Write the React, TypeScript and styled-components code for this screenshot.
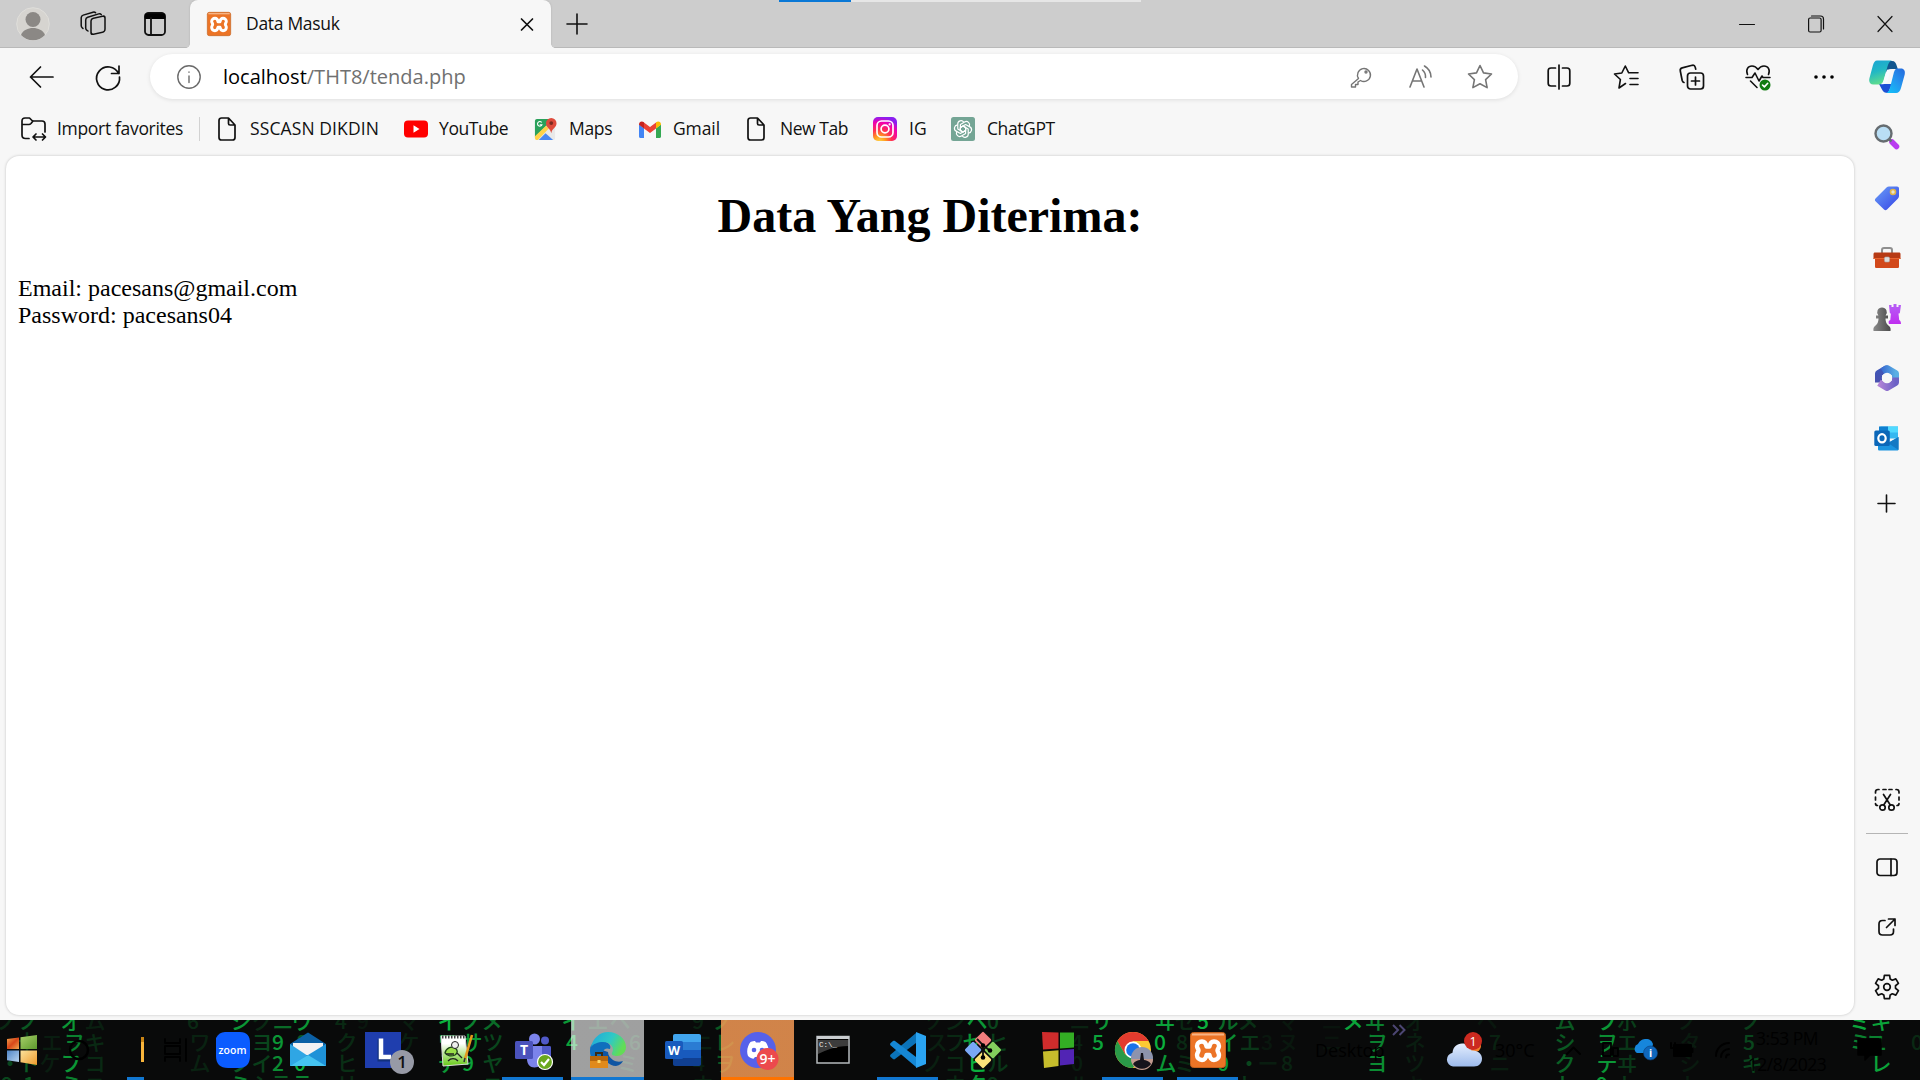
import React from "react";
import styled, { createGlobalStyle } from "styled-components";

const Global = createGlobalStyle`
  html, body { margin: 0; padding: 0; }
  body { width: 1920px; height: 1080px; overflow: hidden; background: #f7f7f7; }
  * { box-sizing: border-box; }
  svg { display: block; flex: none; overflow: visible; }
`;

const ui = `"Open Sans", "Noto Sans", sans-serif`;

const Screen = styled.div`
  width: 1920px;
  height: 1080px;
  display: flex;
  flex-direction: column;
  background: #f7f7f7;
  font-family: ${ui};
  color: #111;
`;

const TitleBar = styled.header`
  height: 48px;
  flex: none;
  display: flex;
  background: #cdcdcd;
  box-shadow: inset 0 -1px 0 #b9b9b9;
  position: relative;
`;

const LoadStrip = styled.div`
  position: absolute;
  left: 779px;
  top: 0;
  width: 362px;
  height: 2px;
  background: linear-gradient(90deg, #0a78d6 72px, #e6e6e6 72px);
`;

const Cell = styled.div<{ $w: number; $h?: number }>`
  width: ${(p) => p.$w}px;
  height: ${(p) => (p.$h ? p.$h + "px" : "auto")};
  flex: none;
  display: flex;
  align-items: center;
  justify-content: center;
`;

const Spacer = styled.div`
  flex: 1;
`;

const Tab = styled.div`
  width: 361px;
  height: 48px;
  background: #f7f7f7;
  border-radius: 8px 8px 0 0;
  display: flex;
  align-items: center;
  padding: 0 15px 0 17px;
  position: relative;
  box-shadow: 0 0 2px #aaa;
  clip-path: inset(0 -4px 0 -4px);
  &::before, &::after {
    content: "";
    position: absolute;
    bottom: 0;
    width: 4px;
    height: 4px;
  }
  &::before { left: -4px; background: radial-gradient(circle at 0 0, transparent 3.5px, #f7f7f7 4px); }
  &::after { right: -4px; background: radial-gradient(circle at 100% 0, transparent 3.5px, #f7f7f7 4px); }
`;

const Label = styled.span<{ $w: number; $ls?: number; $gap?: number }>`
  width: ${(p) => p.$w}px;
  flex: none;
  font-size: 17.5px;
  letter-spacing: ${(p) => p.$ls ?? 0}px;
  margin-left: ${(p) => p.$gap ?? 0}px;
  line-height: 26px;
  padding-bottom: 2px;
  white-space: nowrap;
`;

const Main = styled.div`
  height: 972px;
  flex: none;
  display: flex;
`;

const Left = styled.div`
  width: 1854px;
  display: flex;
  flex-direction: column;
  padding: 0 0 5px 0;
`;

const Toolbar = styled.div`
  height: 57px;
  flex: none;
  display: flex;
  align-items: center;
`;

const Address = styled.div`
  width: 1368px;
  height: 45px;
  flex: none;
  margin: 0 8px 0 16px;
  border-radius: 23px;
  background: #fff;
  box-shadow: 0 1px 4px rgba(0, 0, 0, 0.1);
  display: flex;
  align-items: center;
  padding: 0 9px 0 27px;
`;

const Url = styled.div`
  flex: 1;
  margin-left: 22px;
  font-size: 20px;
  letter-spacing: 0;
  line-height: 30px;
  color: #707070;
  b { font-weight: 400; color: #000; }
`;

const Bookmarks = styled.nav`
  height: 50px;
  flex: none;
  display: flex;
  align-items: center;
  padding: 0 0 2px 21px;
`;

const Divider = styled.div`
  width: 1px;
  height: 24px;
  background: #d2d2d2;
  margin: 0 18px 0 16px;
`;

const Bookmark = styled.div<{ $after: number }>`
  display: flex;
  align-items: center;
  margin-right: ${(p) => p.$after}px;
`;

const Page = styled.main`
  flex: 1;
  margin: 1px 0 0 6px;
  background: #fff;
  border-radius: 13px;
  box-shadow: 0 0 3px rgba(0, 0, 0, 0.22);
  padding: 32px 12px;
  font-family: "Liberation Serif", "Times New Roman", serif;
  font-size: 24px;
  line-height: 27px;
  color: #000;
`;

const Heading = styled.h1`
  margin: 0 0 32px;
  font-size: 48px;
  line-height: 55px;
  text-align: center;
`;

const Sidebar = styled.aside`
  width: 66px;
  display: flex;
  flex-direction: column;
  padding: 0 1px 3px 0;
`;

const SideRule = styled.div`
  width: 42px;
  height: 1px;
  margin: 4px 12px 3px;
  background: #b5b5b5;
`;

const Taskbar = styled.footer`
  height: 60px;
  flex: none;
  position: relative;
  background: #090a0a;
  overflow: hidden;
`;

const Wallpaper = styled.svg`
  position: absolute;
  left: 0;
  top: 0;
  font-family: "Noto Sans CJK JP", sans-serif;
  font-size: 21px;
  font-weight: 500;
`;

const TaskRow = styled.div`
  position: relative;
  height: 60px;
  display: flex;
  align-items: stretch;
`;

const Task = styled.div<{ $w?: number; $bg?: string; $line?: string; $lineW?: number }>`
  width: ${(p) => p.$w ?? 75}px;
  flex: none;
  display: flex;
  align-items: center;
  justify-content: center;
  background: linear-gradient(${(p) => p.$line ?? "transparent"}, ${(p) => p.$line ?? "transparent"}) center bottom /
      ${(p) => p.$lineW ?? 61}px 3px no-repeat,
    linear-gradient(${(p) => p.$bg ?? "transparent"}, ${(p) => p.$bg ?? "transparent"}) center / 73px 100% no-repeat;
`;

const Tray = styled.div<{ $w: number; $pl?: number }>`
  width: ${(p) => p.$w}px;
  flex: none;
  display: flex;
  align-items: center;
  padding-left: ${(p) => p.$pl ?? 0}px;
  color: #000;
  font-size: 18px;
  white-space: nowrap;
`;

const Overflow = styled(Tray)`
  align-items: flex-start;
  padding-top: 4px;
`;

const Clock = styled.div`
  width: 104px;
  display: flex;
  flex-direction: column;
  align-items: center;
  padding: 5px 0 0 0;
  line-height: 26px;
  font-size: 17.5px;
  letter-spacing: -0.5px;
  color: #000;
`;

type SvgProps = { w: number; h?: number; stroke?: string; sw?: number; children: React.ReactNode };
const Line = ({ w, h = w, stroke = "#111", sw = 1.6, children }: SvgProps) => (
  <svg width={w} height={h} viewBox={`0 0 ${w} ${h}`} fill="none" stroke={stroke} strokeWidth={sw} strokeLinecap="round" strokeLinejoin="round">
    {children}
  </svg>
);

const Avatar = () => (
  <svg width="34" height="34" viewBox="0 0 34 34">
    <circle cx="17" cy="17" r="16.3" fill="#d6d4d0" stroke="#e0dfdb" />
    <circle cx="17" cy="12.5" r="7.5" fill="#8b8885" />
    <path d="M5 28c2-5 7-7 12-7s10 2 12 7a16.300 16.300 0 0 1-24 0z" fill="#8b8885" />
  </svg>
);

const Workspaces = () => (
  <Line w={26} sw={1.5}>
    <rect x="11" y="7" width="14" height="16" rx="2.5" transform="matrix(1 -.22 0 1 0 3.2)" />
    <path d="M8 20l-1-.7c-1-.6-1.300-1.200-1.300-2.400V9c0-1.500.7-2.400 2-2.800l11-3.300c1-.3 2-.1 2.600.7" />
    <path d="M3 17.500l-.8-.8C1.400 16 1.200 15.400 1.200 14.500V6.800c0-1.500.7-2.300 2-2.700L13 1.200c1-.3 2-.1 2.600.6" />
  </Line>
);

const TabActions = () => (
  <Line w={22} h={24} sw={1.8}>
    <rect x="1" y="1" width="20" height="22" rx="3.5" />
    <path d="M1.500 2.500h19v3.500h-19z" fill="#000" stroke="#000" />
    <path d="M7 6v17" />
  </Line>
);

const Xampp = ({ size }: { size: number }) => (
  <svg width={size} height={size} viewBox="0 0 36 36">
    <rect x=".5" y=".5" width="35" height="35" rx="3" fill="#ec7426" stroke="#c4601d" />
    <path d="M2 2.500h32" stroke="#f7b384" strokeWidth="2" />
    <path
      d="M18 14.500h-1.500c-.5-3-2-5-4.500-5-3 0-5 2-5 4.500 0 2 1.500 3 1.500 4.500S7 21 7 23c0 2.800 2 5 5 5 2.500 0 4-2 4.500-5h3c.5 3 2 5 4.500 5 3 0 5-2.200 5-5 0-2-1.500-3-1.500-4.500S29 16 29 14c0-2.500-2-4.500-5-4.500-2.500 0-4 2-4.500 5z"
      fill="#ec7426" stroke="#fff" strokeWidth="4.4" strokeLinejoin="round"
    />
  </svg>
);

const Star = ({ color = "#111", list = false }: { color?: string; list?: boolean }) => (
  <Line w={26} stroke={color} sw={1.6}>
    {list ? (
      <path d="M12.500 19.500l-6.500 4.500 1.400-8.500L1.500 10l7.300-1L12.300 2l3.400 6.800H25M17 14.500h8M17 20.500h8" />
    ) : (
      <path d="M13 1.500l3.500 7.400 8 1.100-5.900 5.600 1.500 8L13 19.700l-7.100 3.900 1.500-8L1.500 10l8-1.100z" />
    )}
  </Line>
);

const DocIcon = () => (
  <Line w={18} h={24} sw={1.7}>
    <path d="M10.500 1H3.500C2 1 1 2 1 3.500v17C1 22 2 23 3.500 23h11c1.500 0 2.500-1 2.500-2.500V8zM10.500 1v5.500c0 1 .5 1.500 1.500 1.500h5" />
  </Line>
);

const Copilot = () => (
  <svg width="36" height="33" viewBox="0 0 36 33">
    <defs>
      <linearGradient id="cpA" x1="0" y1="0" x2=".3" y2="1"><stop stopColor="#1aa3d4" /><stop offset=".5" stopColor="#22b8c4" /><stop offset="1" stopColor="#5fdc8e" /></linearGradient>
      <linearGradient id="cpB" x1="1" y1="0" x2=".2" y2="1"><stop stopColor="#2468dc" /><stop offset=".55" stopColor="#2496ef" /><stop offset="1" stopColor="#14bdf8" /></linearGradient>
    </defs>
    <path d="M17 1h6c3 0 4 2 4.800 5l1 3h-6c-3 0-5 2-6 5z" fill="#10568f" />
    <path d="M10 24l3 5.500c1 2.500 3 3.500 6 3.500l4-9z" fill="#1d50d5" />
    <path d="M8 .5h15c-2.500.5-3.500 2.500-4.500 6l-4 14c-1 3-2.500 4-5 4H4C1 24.500-.5 21.500.5 18L4 5C5 2 6 .5 8 .500z" fill="url(#cpA)" />
    <path d="M28.500 8.500H32c3 0 4.500 2.500 3.700 6L32 28c-1 3.500-2.500 5-5 5H17.500c2-1 3-3 3.700-6l3.300-13c1-4 2-5.500 4-5.500z" fill="url(#cpB)" />
    <path d="M18.500 9.500h3.800c-1 1-1.500 2.300-2 4.500l-1.500 6c-.8 3-2.300 4.200-5.300 4.200h-2c2-.5 2.800-2 3.500-4.700l2-7c.3-1.300.8-2.300 1.500-3z" fill="#f7fbff" />
  </svg>
);

const SearchPic = () => (
  <svg width="26" height="26" viewBox="0 0 26 26">
    <path d="M18 18l4.500 4.500" stroke="#b93cf0" strokeWidth="5.5" strokeLinecap="round" />
    <path d="M14.500 14.500l3 3" stroke="#66707a" strokeWidth="2.5" />
    <circle cx="9.500" cy="9.500" r="8" fill="#b9def5" stroke="#666c70" strokeWidth="2.4" />
  </svg>
);

const TagPic = () => (
  <svg width="26" height="26" viewBox="0 0 26 26">
    <defs><linearGradient id="tg" x2="1" y2="1"><stop stopColor="#6ba0f8" /><stop offset="1" stopColor="#3442e5" /></linearGradient></defs>
    <path d="M15 1.500h8c1.200 0 2 .8 2 2V11c0 1-.3 1.700-1 2.400L13 24.500c-1 1-2 1-3 0l-8.500-8.300c-.8-.8-.8-2 0-2.800L12.500 2.500c.7-.7 1.500-1 2.500-1z" fill="url(#tg)" />
    <circle cx="19" cy="7" r="2.500" fill="#e9e4cc" stroke="#e3b548" strokeWidth="1.6" />
  </svg>
);

const ToolboxPic = () => (
  <svg width="28" height="22" viewBox="0 0 28 22">
    <path d="M9 6V3c0-1.300.8-2 2-2h6c1.200 0 2 .7 2 2v3" fill="none" stroke="#8f8f8f" strokeWidth="2" />
    <path d="M2 11h24v8.500c0 1-.6 1.500-1.500 1.500h-21C2.600 21 2 20.500 2 19.500z" fill="#d2491b" />
    <path d="M2 5.500h24c1 0 1.500.7 1.500 1.600V12H.5V7.100C.5 6.200 1 5.500 2 5.500z" fill="#b73a14" />
    <path d="M.5 11.500h27" stroke="#e9642f" />
    <rect x="11.500" y="10" width="5" height="5" rx="1.2" fill="#ddd" stroke="#aaa" strokeWidth=".6" />
  </svg>
);

const ChessPic = () => (
  <svg width="28" height="28" viewBox="0 0 28 28">
    <defs>
      <linearGradient id="pw" x2="1"><stop stopColor="#8b8b8b" /><stop offset="1" stopColor="#4a4a4a" /></linearGradient>
      <linearGradient id="rk" x2="0" y2="1"><stop stopColor="#b560f5" /><stop offset="1" stopColor="#c02ef0" /></linearGradient>
    </defs>
    <path d="M16 1h2.500v2h2V0h3v3h2V1H28l-1 7c0 1-.5 1.500-1.500 1.500l.7 6.500c1 .5 1.800 1.500 1.800 4H16c-.8-3 0-3.500 1.300-4l.6-6.500c-.8 0-1.100-.5-1.200-1.500z" fill="url(#rk)" />
    <path d="M9 3.500a4.800 4.800 0 0 1 3.600 8H15v3h-2.500c.2 4 1 5.500 3.500 7.500 1 .8 2 2 1.500 5H.5c-.5-3 .5-4.200 1.500-5 2.500-2 3.300-3.500 3.500-7.500H3v-3h2.400A4.800 4.800 0 0 1 9 3.500z" fill="url(#pw)" />
  </svg>
);

const M365Pic = () => (
  <svg width="26" height="28" viewBox="0 0 26 28">
    <defs>
      <linearGradient id="ma" x2="1"><stop stopColor="#3a6fd2" /><stop offset="1" stopColor="#5aaee4" /></linearGradient>
      <linearGradient id="mb" x2="0" y2="1"><stop stopColor="#3e56b8" /><stop offset="1" stopColor="#4a50ae" /></linearGradient>
      <linearGradient id="mc" x2="1"><stop stopColor="#b383d6" /><stop offset="1" stopColor="#6d62c6" /></linearGradient>
    </defs>
    <g fill="none" strokeWidth="7" strokeLinejoin="round">
      <path d="M4.500 18.500V9.500L13 4.600" stroke="url(#mb)" />
      <path d="M21.500 10v8.500L13 23.400 5 18.800" stroke="url(#mc)" />
      <path d="M8.500 7.200L13 4.600l8.500 4.900v4" stroke="url(#ma)" />
    </g>
    <circle cx="13" cy="14" r="5.2" fill="#f7f7f7" />
  </svg>
);

const OutlookPic = () => (
  <svg width="25" height="25" viewBox="0 0 25 25">
    <path d="M7 .5h17v12H5V2.500C5 1.300 5.800.5 7 .500z" fill="#35b8f1" />
    <path d="M14 .5h10v6H14z" fill="#50d9ff" /><path d="M5 .5h9v7H5z" fill="#0f7fd0" />
    <path d="M4 11l10 6 10.500-6v12c0 1-.5 1.500-1.500 1.500H5.500c-1 0-1.500-.5-1.500-1.500z" fill="#1b94e0" />
    <path d="M24.500 11v13L14 17z" fill="#1479c4" />
    <rect x=".3" y="4.500" width="15.500" height="15.500" rx="1.5" fill="#0b67b8" />
    <ellipse cx="8" cy="12.300" rx="3.700" ry="4.100" fill="none" stroke="#fff" strokeWidth="2.2" />
  </svg>
);

const Plus = ({ s = 20, sw = 1.6 }: { s?: number; sw?: number }) => (
  <Line w={s} sw={sw}><path d={`M${s / 2} 1v${s - 2}M1 ${s / 2}h${s - 2}`} /></Line>
);

const gearPath = () => {
  const pts: string[] = [];
  for (let i = 0; i < 6; i++) {
    const a = (i * Math.PI) / 3 - Math.PI / 2;
    [[-0.38, 8.6], [-0.22, 12], [0.22, 12], [0.38, 8.6]].forEach(([d, r]) =>
      pts.push(`${(13 + r * Math.cos(a + d)).toFixed(2)} ${(13 + r * Math.sin(a + d)).toFixed(2)}`)
    );
  }
  return "M" + pts.join("L") + "z";
};

const YouTube = () => (
  <svg width="24" height="18" viewBox="0 0 24 18"><rect y=".5" width="24" height="17" rx="4" fill="#f00" /><path d="M9.500 5.300v7.400l6-3.700z" fill="#fff" /></svg>
);

const Maps = () => (
  <svg width="23" height="23" viewBox="0 0 24 24">
    <path d="M1 3c0-1 1-2 2-2h13l6 8v12c0 1-1 2-2 2H3c-1 0-2-1-2-2z" fill="#e9e9e9" />
    <path d="M1 3c0-1 1-2 2-2h13l-2 6L1 20z" fill="#2aa15b" />
    <path d="M1 19L12.500 8l3 3L4 23H3c-1 0-2-1-2-2z" fill="#ffd34a" />
    <path d="M5 23l7-7 8 7z" fill="#4a89f3" />
    <path d="M18 0a5.500 5.500 0 0 1 5.500 5.500C23.500 10 19 10.500 18 16c-1-5.500-5.500-6-5.500-10.500A5.500 5.500 0 0 1 18 0z" fill="#de4b3c" />
    <circle cx="18" cy="5.300" r="2" fill="#7c2a20" />
    <path d="M8 4.700A2.400 2.400 0 1 0 8.300 7H6" fill="none" stroke="#fff" strokeWidth="1.1" />
  </svg>
);

const Gmail = () => (
  <svg width="22" height="17" viewBox="0 0 22 17">
    <path d="M0 3.500l5 3.800V17H1.500C.6 17 0 16.400 0 15.500z" fill="#4285f4" />
    <path d="M22 3.500l-5 3.800V17h3.500c.9 0 1.500-.6 1.500-1.500z" fill="#34a853" />
    <path d="M5 1.500l6 4.600 6-4.600v6L11 12 5 7.500z" fill="#ea4335" />
    <path d="M0 3.500C0 .8 2.700-.5 5 1.300v6.200L0 3.700z" fill="#c5221f" />
    <path d="M22 3.500c0-2.700-2.700-4-5-2.200v6.200l5-3.800z" fill="#fbbc04" />
  </svg>
);

const Insta = () => (
  <svg width="24" height="24" viewBox="0 0 24 24">
    <defs>
      <radialGradient id="ig" cx=".27" cy="1.05" r="1.05"><stop stopColor="#ffd84a" /><stop offset=".25" stopColor="#ff9a1f" /><stop offset=".5" stopColor="#ff2f52" /><stop offset=".8" stopColor="#f000b0" /><stop offset="1" stopColor="#8a1ff0" /></radialGradient>
    </defs>
    <rect width="24" height="24" rx="5" fill="url(#ig)" />
    <rect x="4" y="4" width="16" height="16" rx="4.5" fill="none" stroke="#fff" strokeWidth="1.7" />
    <circle cx="12" cy="12" r="3.9" fill="none" stroke="#fff" strokeWidth="1.7" /><circle cx="16.600" cy="7.400" r="1.1" fill="#fff" />
  </svg>
);

const ChatGpt = () => (
  <svg width="24" height="24" viewBox="0 0 24 24">
    <rect width="24" height="24" rx="2.5" fill="#74a595" />
    <g fill="none" stroke="#fff" strokeWidth="1.2" strokeLinejoin="round">
      {[0, 60, 120, 180, 240, 300].map((a) => (
        <path key={a} transform={`rotate(${a} 12 12)`} d="M9.400 13.500V7.500l4.200-2.500a3.300 3.300 0 0 1 4.700 4.200M9.400 10.500L12 9l2.600 1.500" />
      ))}
    </g>
  </svg>
);

/* glyph, x centre, row, brightness */
const rain: [string, number, number, number][] = [
  ["ノ", 7, 0, 0.3], ["ノ", 29, 0, 0.6], ["オ", 71, 0, 0.9], ["ム", 95, 0, 0.22], ["6", 193, 0, 0.3], ["シ", 241, 0, 0.9], ["ク", 262, 0, 0.3], ["ニ", 283, 0, 0.7], ["ウ", 302, 0, 0.9], ["4", 341, 0, 0.3], ["9", 363, 0, 0.15],
  ["エ", 52, 1, 0.2], ["ヲ", 74, 1, 0.8], ["キ", 95, 1, 0.3], ["ワ", 200, 1, 0.25], ["イ", 240, 1, 0.8], ["ヨ", 262, 1, 0.5], ["9", 278, 1, 0.9], ["8", 302, 1, 0.6], ["ク", 347, 1, 0.3], ["十", 27, 1, 0.4],
  ["ケ", 50, 2, 0.2], ["フ", 71, 2, 0.9], ["コ", 95, 2, 0.3], ["ト", 29, 2, 0.6], ["・", 10, 2, 0.5], ["ム", 200, 2, 0.25], ["イ", 262, 2, 0.45], ["2", 278, 2, 0.85], ["0", 300, 2, 1], ["ヒ", 347, 2, 0.35], ["フ", 240, 2, 0.6],
  ["9", 7, 3, 0.5], ["1", 29, 3, 0.6], ["ミ", 71, 3, 0.8], ["ニ", 95, 3, 0.3], ["ミ", 240, 3, 0.8], ["シ", 262, 3, 0.4], ["テ", 281, 3, 0.6], ["ラ", 302, 3, 0.8], ["リ", 347, 3, 0.3],
  ["マ", 409, 0, 0.2], ["イ", 448, 0, 1], ["ノ", 472, 0, 0.8], ["メ", 492, 0, 0.7], ["イ", 572, 0, 0.9], ["エ", 598, 0, 0.35], ["ヘ", 620, 0, 0.3], ["9", 698, 0, 0.25], ["ノ", 723, 0, 0.6],
  ["ケ", 409, 1, 0.22], ["ワ", 448, 1, 0.9], ["サ", 472, 1, 0.9], ["ツ", 493, 1, 0.5], ["4", 572, 1, 0.95], ["6", 635, 1, 0.35], ["ニ", 703, 1, 0.2], ["レ", 725, 1, 0.6],
  ["テ", 448, 2, 0.9], ["9", 468, 2, 0.95], ["ヤ", 493, 2, 0.5], ["ミ", 628, 2, 0.3], ["4", 699, 2, 0.2], ["ヲ", 725, 2, 0.6], ["・", 470, 3, 0.9], ["ニ", 493, 3, 0.5], ["ホ", 703, 3, 0.25],
  ["ソ", 933, 0, 0.22], ["ン", 955, 0, 0.28], ["ヘ", 977, 0, 0.9], ["0", 993, 0, 0.5], ["ニ", 1080, 0, 0.25], ["リ", 1102, 0, 0.9], ["ヰ", 1165, 0, 0.95], ["セ", 1185, 0, 0.3],
  ["ス", 937, 1, 0.22], ["フ", 955, 1, 0.3], ["セ", 973, 1, 0.9], ["ヒ", 998, 1, 0.45], ["4", 1077, 1, 0.25], ["5", 1098, 1, 0.95], ["0", 1160, 1, 1], ["8", 1182, 1, 0.3],
  ["ノ", 933, 2, 0.22], ["コ", 955, 2, 0.3], ["ヒ", 977, 2, 1], ["ル", 998, 2, 0.4], ["0", 1077, 2, 0.2], ["ム", 1166, 2, 0.9], ["ミ", 1185, 2, 0.3], ["ホ", 955, 3, 0.3], ["タ", 977, 3, 0.9], ["9", 993, 3, 0.4], ["ル", 1080, 3, 0.2],
  ["5", 1203, 0, 1], ["ル", 1228, 0, 0.7], ["メ", 1248, 0, 0.35], ["マ", 1288, 0, 0.15], ["ニ", 1332, 0, 0.12], ["メ", 1353, 0, 0.95], ["ヰ", 1375, 0, 0.8], ["オ", 1415, 0, 0.2], ["ヘ", 1487, 0, 0.15], ["ム", 1565, 0, 0.6],
  ["イ", 1228, 1, 0.85], ["エ", 1250, 1, 0.4], ["3", 1267, 1, 0.15], ["ヌ", 1288, 1, 0.15], ["ニ", 1332, 1, 0.12], ["ヲ", 1377, 1, 0.8], ["ネ", 1415, 1, 0.2], ["7", 1495, 1, 0.25], ["シ", 1565, 1, 0.6],
  ["0", 1223, 2, 0.9], ["・", 1249, 2, 0.5], ["ー", 1268, 2, 0.2], ["8", 1287, 2, 0.25], ["ヨ", 1377, 2, 0.85], ["ツ", 1415, 2, 0.2], ["ニ", 1500, 2, 0.2], ["ク", 1565, 2, 0.65], ["ト", 1247, 3, 0.4], ["ト", 1565, 3, 0.65], ["キ", 1415, 3, 0.15],
  ["フ", 1607, 0, 0.9], ["ホ", 1627, 0, 0.45], ["ノ", 1688, 0, 0.2], ["ノ", 1752, 0, 0.45], ["ミ", 1860, 0, 0.95], ["キ", 1881, 0, 0.95],
  ["ヲ", 1607, 1, 0.85], ["エ", 1627, 1, 0.4], ["タ", 1690, 1, 0.18], ["5", 1749, 1, 0.5], ["ミ", 1860, 1, 0.8], ["ユ", 1876, 1, 0.8], ["0", 1917, 1, 0.3],
  ["テ", 1607, 2, 0.9], ["ヰ", 1627, 2, 0.4], ["シ", 1690, 2, 0.18], ["キ", 1752, 2, 0.5], ["レ", 1881, 2, 0.95], ["9", 1602, 3, 0.9], ["ト", 1627, 3, 0.4], ["ト", 1690, 3, 0.2],
];

const blue = "#1177d1";

const Win7 = () => (
  <svg width="32" height="32" viewBox="0 0 32 32">
    <defs>
      <linearGradient id="wa" x2="1" y2="1"><stop stopColor="#f2a14a" /><stop offset=".5" stopColor="#d8471a" /><stop offset="1" stopColor="#f1a74d" /></linearGradient>
      <linearGradient id="wb" x2="1" y2="1"><stop stopColor="#a8cf6a" /><stop offset="1" stopColor="#5d9a2c" /></linearGradient>
      <linearGradient id="wc" x2="1" y2="1"><stop stopColor="#4f86c8" /><stop offset="1" stopColor="#b9d4ef" /></linearGradient>
      <linearGradient id="wd" x2="1" y2="1"><stop stopColor="#fbe29c" /><stop offset="1" stopColor="#ee9a2c" /></linearGradient>
    </defs>
    <path d="M1 5l12-1.500V15H1z" fill="url(#wa)" /><path d="M14.500 3.200L31 1v14H14.500z" fill="url(#wb)" />
    <path d="M1 16.500h12V28L1 26.300z" fill="url(#wc)" /><path d="M14.500 16.500H31V31l-16.500-2.700z" fill="url(#wd)" />
  </svg>
);

const IconText = ({ x, y, size, color = "#fff", weight = 700, children }: { x: number; y: number; size: number; color?: string; weight?: number; children: React.ReactNode }) => (
  <text x={x} y={y} fontSize={size} fill={color} fontWeight={weight} textAnchor="middle" fontFamily="Open Sans, sans-serif" stroke="none">{children}</text>
);

const T = ({ children }: { children: React.ReactNode }) => <svg width="36" height="36" viewBox="0 0 36 36">{children}</svg>;

export default function App() {
  return (
    <Screen>
      <Global />
      <TitleBar>
        <LoadStrip />
        <Cell $w={66}><Avatar /></Cell>
        <Cell $w={54}><Workspaces /></Cell>
        <Cell $w={70}><TabActions /></Cell>
        <Tab>
          <Xampp size={24} />
          <Label $w={274} $gap={15} $ls={-0.3}>Data Masuk</Label>
          <Line w={14} sw={1.7}><path d="M1.500 2l11 11M12.500 2l-11 11" /></Line>
        </Tab>
        <Cell $w={52}><Plus s={22} /></Cell>
        <Spacer />
        <Cell $w={69}><Line w={16} sw={1.1}><path d="M.5 8.500h15" /></Line></Cell>
        <Cell $w={69}><Line w={16} h={18} sw={1.2}><rect x=".6" y="3" width="12.500" height="14" rx="1.5" /><path d="M3.500 1h9C14.500 1 15.500 2 15.500 4v10" /></Line></Cell>
        <Cell $w={70}><Line w={16} sw={1.2}><path d="M1 .5l14 15M15 .5L1 15.500" /></Line></Cell>
      </TitleBar>

      <Main>
        <Left>
          <Toolbar>
            <Cell $w={82}><Line w={25} h={22} sw={1.7}><path d="M24 11H1.500M11.500 1L1.500 11l10 10" /></Line></Cell>
            <Cell $w={52}><Line w={26} sw={1.7}><path d="M23.500 9.500A11.500 11.500 0 1 0 24.500 13M24 2v7.500h-7.500" /></Line></Cell>
            <Address>
              <Line w={24} stroke="#6b6b6b" sw={1.4}><circle cx="12" cy="12" r="11.2" /><path d="M12 11v6.500M12 7v.3" /></Line>
              <Url><b>localhost</b>/THT8/tenda.php</Url>
              <Cell $w={60}>
                <Line w={22} stroke="#757575" sw={1.4}>
                  <path d="M8.500 12.500L1.500 18.500V21h4v-2.500H8V16l2.500-1.500a6.500 6.500 0 1 0-2-2z" /><circle cx="16" cy="6" r="1" />
                </Line>
              </Cell>
              <Cell $w={60}>
                <Line w={24} stroke="#757575" sw={1.6}><path d="M1 22L8 4l7 18M3.500 16h9M13.500 5a9 9 0 0 1 3 7.500M15.500 1a13 13 0 0 1 6.500 11" /></Line>
              </Cell>
              <Cell $w={58}><Star color="#757575" /></Cell>
            </Address>
            <Cell $w={66}>
              <Line w={24} h={26} sw={1.7}><path d="M8.500 4H4C2.300 4 1.200 5 1.200 6.700v12.600C1.200 21 2.300 22 4 22h4.500M15.500 4H20c1.700 0 2.800 1 2.800 2.700v12.600c0 1.700-1.100 2.700-2.800 2.700h-4.500M12 1v24" /></Line>
            </Cell>
            <Cell $w={67}><Star list /></Cell>
            <Cell $w={66}>
              <Line w={26} sw={1.7}>
                <rect x="8.500" y="9" width="16" height="16" rx="3" /><path d="M16.500 13v8M12.500 17h8" />
                <path d="M5 18.500c-1-.3-1.500-1-1.800-2L1.300 7c-.3-1.500.3-2.700 1.900-3.100l10-2.600c1.500-.3 2.600.3 3 1.800l.5 2" />
              </Line>
            </Cell>
            <Cell $w={66}>
              <Line w={26} sw={1.6}>
                <path d="M2.500 10.500C.5 5.500 3 2 7 2c2.500 0 4.500 1.300 6 3.500C14.500 3.300 16.500 2 19 2c4 0 6.500 3.500 4.500 8.500M1 13.500h6l3-4.500 4 8 3-5 1 1.500h7M5.500 17l6.500 6.500" />
                <circle cx="20" cy="21" r="5.500" fill="#107c10" stroke="none" /><path d="M17.500 21l1.900 1.900 3.300-3.600" stroke="#fff" />
              </Line>
            </Cell>
            <Cell $w={63}><svg width="20" height="4" viewBox="0 0 20 4"><circle cx="3" cy="2" r="1.8" /><circle cx="11" cy="2" r="1.8" /><circle cx="19" cy="2" r="1.8" /></svg></Cell>
          </Toolbar>
          <Bookmarks>
            <Bookmark $after={0}>
              <Line w={25} h={24} sw={1.7}>
                <path d="M8 21.500H4.500c-2 0-3.500-1.200-3.500-3.500V4c0-2 1-3 3-3h4.500l3 3H21c2 0 3 1.200 3 3v8M1.500 7.500h6.500c1 0 1.500-.5 2-1l2-2.500M12.500 20h11M15 17l-3 3 3 3M21.500 17l3 3-3 3" />
              </Line>
              <Label $w={126} $gap={11} $ls={-0.32}>Import favorites</Label>
            </Bookmark>
            <Divider />
            <Bookmark $after={25}><DocIcon /><Label $w={129} $gap={14} $ls={0.1}>SSCASN DIKDIN</Label></Bookmark>
            <Bookmark $after={26}><YouTube /><Label $w={69} $gap={11} $ls={-0.4}>YouTube</Label></Bookmark>
            <Bookmark $after={27}><Maps /><Label $w={43} $gap={12} $ls={-0.3}>Maps</Label></Bookmark>
            <Bookmark $after={28}><Gmail /><Label $w={46} $gap={12} $ls={-0.1}>Gmail</Label></Bookmark>
            <Bookmark $after={25}><DocIcon /><Label $w={68} $gap={15} $ls={-0.45}>New Tab</Label></Bookmark>
            <Bookmark $after={25}><Insta /><Label $w={17} $gap={12}>IG</Label></Bookmark>
            <Bookmark $after={0}><ChatGpt /><Label $w={68} $gap={12} $ls={-0.4}>ChatGPT</Label></Bookmark>
          </Bookmarks>
          <Page>
            <Heading>Data Yang Diterima:</Heading>
            Email: pacesans@gmail.com<br />
            Password: pacesans04
          </Page>
        </Left>

        <Sidebar>
          <Cell $w={65} $h={57}><Copilot /></Cell>
          <Cell $w={65} $h={63}><SearchPic /></Cell>
          <Cell $w={65} $h={60}><TagPic /></Cell>
          <Cell $w={65} $h={60}><ToolboxPic /></Cell>
          <Cell $w={65} $h={59}><ChessPic /></Cell>
          <Cell $w={65} $h={61}><M365Pic /></Cell>
          <Cell $w={65} $h={60}><OutlookPic /></Cell>
          <Cell $w={65} $h={70}><Plus s={19} /></Cell>
          <Spacer />
          <Cell $w={65} $h={60}>
            <Line w={26} h={22} sw={1.7}>
              <path d="M1.500 5V4c0-1.500 1-2.500 2.500-2.500h1M9 1.500h3M15 1.500h3M22 1.500h.5c1.500 0 2.500 1 2.500 2.500v1M25 9v3M25 15.500c0 1.300-.8 2-2 2M1.500 9v3M1.500 15.500c0 1.300.8 2 2 2M9.500 6.500l6.800 10.500M16.500 6.500L9.700 17" />
              <circle cx="8.500" cy="19.500" r="2.7" /><circle cx="17.500" cy="19.500" r="2.7" />
            </Line>
          </Cell>
          <SideRule />
          <Cell $w={65} $h={60}><Line w={22} h={18} sw={1.7}><rect x="1" y="1" width="20" height="16.500" rx="3" /><path d="M15 1v16.500" /></Line></Cell>
          <Cell $w={65} $h={60}><Line w={18} h={18} sw={1.7}><path d="M7 2.500H4.500C2.300 2.500 1 3.800 1 6v7.500C1 15.700 2.300 17 4.500 17H12c2.200 0 3.500-1.300 3.500-3.500V11M10.500 1H17v6.500M17 1L8.500 9.500" /></Line></Cell>
          <Cell $w={65} $h={60}><Line w={26} sw={1.7}><path d={gearPath()} /><circle cx="13" cy="13" r="3.3" /></Line></Cell>
        </Sidebar>
      </Main>

      <Taskbar>
        <Wallpaper width="1920" height="60" viewBox="0 0 1920 60">
          {rain.map(([g, x, row, o], i) => (
            <text key={i} x={x} y={row * 21 + 9} textAnchor="middle" fill="#0cc344" opacity={o * o * 0.5 + o * 0.4}>{g}</text>
          ))}
        </Wallpaper>
        <TaskRow>
          <Task $w={44}><Win7 /></Task>
          <Task $w={70}><Line w={20} stroke="#000" sw={2.5}><circle cx="10" cy="10" r="9" /></Line></Task>
          <Task $w={43}>
            <svg width="17" height="60" viewBox="0 0 17 60"><path d="M14 17h3v25h-3z" fill="#f9b53b" /><path d="M14 17h3v5h-3z" fill="#c98515" /><path d="M0 57h17v3H0z" fill={blue} /></svg>
          </Task>
          <Task $w={38}><Line w={24} stroke="#000" sw={1.8}><path d="M1 1v4h15V1M1 8h15v8H1zM1 23v-4h15v4M22 1v22" /></Line></Task>
          <Task $w={75}>
            <svg width="34" height="36" viewBox="0 0 34 36"><path d="M9 0h15c7 0 10 4 10 11v13c0 8-4 12-11 12H12C4 36 0 32 0 24V6C2 2 5 0 9 0z" fill="#0b5cff" /><IconText x={16.5} y={21.5} size={10.5} weight={600}>zoom</IconText></svg>
          </Task>
          <Task>
            <T><path d="M0 12L18 .5 36 12v6H0z" fill="#0b60a5" /><path d="M3 11h30v12H3z" fill="#f2f2f4" /><path d="M0 12l18 12v10H0z" fill="#2fa6e4" /><path d="M36 12L18 23 0 34h36z" fill="#1e92d8" /><path d="M0 34L18 23l18 11z" fill="#45c3f0" /></T>
          </Task>
          <Task>
            <T><path d="M0 0h36v36H0z" fill="#1f3eae" /><path d="M15 7.500V27h11" fill="none" stroke="#12307c" strokeWidth="5" /><path d="M16 6.500V25h10" fill="none" stroke="#fff" strokeWidth="4.5" /><circle cx="37" cy="30" r="12" fill="#979aa6" /><IconText x={37} y={36} size={17} color="#111" weight={600}>1</IconText></T>
          </Task>
          <Task>
            <T>
              <defs><linearGradient id="np" x2="0" y2="1"><stop offset=".25" stopColor="#fff" /><stop offset="1" stopColor="#64c813" /></linearGradient></defs>
              <path d="M1 4h24l3 28-25 2z" fill="url(#np)" stroke="#ddd" /><path d="M2 5h23" stroke="#444" strokeWidth="3" strokeDasharray="1.5 1.5" />
              <path d="M5 21c1-5 6-7 10-5 3 2 3 5 0 7-3 1.500-8 1.500-10-2z" fill="#9be04a" stroke="#1b4416" strokeWidth="1.3" />
              <circle cx="15" cy="13" r="3.5" fill="#eee" stroke="#222" /><path d="M6 22h8M17 21l5 5M8 29c3-3 7-3 10 0" stroke="#222" strokeWidth="1.3" fill="none" />
              <path d="M32 3L25 27" stroke="#e59a1d" strokeWidth="2.6" /><path d="M25 26l-1 4" stroke="#333" strokeWidth="1.5" />
            </T>
          </Task>
          <Task $line={blue}>
            <T>
              <circle cx="30" cy="8.500" r="4" fill="#5059c9" /><circle cx="19.500" cy="7" r="5.5" fill="#7b83eb" />
              <path d="M26 14h8.500c1 0 1.500.7 1.500 1.500V24c0 5-4 8-8 7z" fill="#5059c9" /><path d="M12 14h15v13c0 5-3 8.500-7.500 8.500S12 32 12 27z" fill="#7b83eb" />
              <rect x="0" y="9" width="18" height="18" rx="1.5" fill="#4b53bc" /><IconText x={9} y={23} size={14}>T</IconText>
              <circle cx="30" cy="30" r="7.5" fill="#6aa81e" stroke="#fff" strokeWidth="1.2" /><path d="M26 30l3 3 5-6" fill="none" stroke="#fff" strokeWidth="2.2" />
            </T>
          </Task>
          <Task $bg="rgba(255,255,255,.61)" $line={blue} $lineW={73}>
            <T>
              <defs>
                <linearGradient id="ea" x2="1" y2=".4"><stop stopColor="#1ea7dc" /><stop offset=".6" stopColor="#2fc9c5" /><stop offset="1" stopColor="#62dc55" /></linearGradient>
              </defs>
              <path d="M12 18c0 9 7 16 14 16 4-.5 6-3 7-5-3 1-7 1-10-1s-5-5-5-8z" fill="#0f55a3" />
              <path d="M0 18C0 11 6 9 11 9c6 0 11 4 9 8-6-2-8 2-7 8H1c-.7-2-1-4-1-7z" fill="#0f6fbd" />
              <path d="M1 15C3 6 10 0 18 0c10 0 18 7 18 15 0 6-5 9-9 9-3 0-6-1-5-3 3-5-1-11-9-11C8 10 3 12 1 15z" fill="url(#ea)" />
              <path d="M0 24h18v12H0z" fill="#e08a1b" /><path d="M0 24h18v5H0z" fill="#b5660d" /><path d="M6 24v-3h6v3" fill="none" stroke="#3a2b14" strokeWidth="2" /><path d="M7.500 28h3v3h-3z" fill="#ffd766" />
            </T>
          </Task>
          <Task>
            <T>
              <path d="M8 4c0-1.300.7-2 2-2h24c1.300 0 2 .7 2 2v6H8z" fill="#41a5ee" /><path d="M8 10h28v8H8z" fill="#2b7cd3" /><path d="M8 18h28v8H8z" fill="#185abd" /><path d="M8 26h28v6c0 1.300-.7 2-2 2H10c-1.300 0-2-.7-2-2z" fill="#103f91" />
              <rect x="0" y="9" width="18" height="18" rx="1.5" fill="#185abd" /><IconText x={9} y={22.5} size={12.5}>W</IconText>
            </T>
          </Task>
          <Task $bg="rgba(255,160,88,.81)" $line="#ff7300" $lineW={73}>
            <T>
              <circle cx="18" cy="18" r="18" fill="#5661ea" />
              <path d="M8 24c-2-5 0-11 2.500-14 2-.8 3.500-1 4.500-1l1 1.500h4L21 9c1 0 2.500.2 4.500 1C28 13 30 19 28 24c-2 2-4 2.500-5.500 2.700L21 25h-6l-1.500 1.700C12 26.500 10 26 8 24z" fill="#fff" />
              <circle cx="14" cy="18" r="2.3" fill="#5661ea" /><circle cx="22" cy="18" r="2.3" fill="#5661ea" />
              <circle cx="27.500" cy="27" r="11" fill="#ec4a4d" /><IconText x={27.5} y={32} size={14} weight={600}>9+</IconText>
            </T>
          </Task>
          <Task>
            <T><rect x="2" y="4.500" width="32" height="26.500" fill="#000" stroke="#b5babd" strokeWidth="1.5" /><path d="M2 4h32v3H2z" fill="#c9cdd0" /><path d="M3 8h30v6C20 14 12 18 3 22z" fill="#3c3c3c" /><text x="4" y="15" fontSize="7.5" fill="#eee" fontFamily="Liberation Mono, monospace">C:\_</text></T>
          </Task>
          <Task $line={blue}>
            <T>
              <path d="M26 0l10 4v28l-10 4z" fill="#2aa4f2" /><path d="M26 1v10L5 27c-.6.5-1.300.5-2 0L.7 25c-.8-.8-.8-1.700 0-2.500z" fill="#0b73b9" />
              <path d="M26 35V25L5 9c-.6-.5-1.300-.5-2 0L.7 11c-.8.8-.8 1.700 0 2.500z" fill="#1587d4" />
            </T>
          </Task>
          <Task>
            <T>
              <g transform="rotate(45 18 18)">
                <rect x="4.800" y="4.800" width="12.400" height="12.400" rx="1.5" fill="#f27d7d" /><rect x="18.800" y="4.800" width="12.400" height="12.400" rx="1.5" fill="#83cf5d" />
                <rect x="4.800" y="18.800" width="12.400" height="12.400" rx="1.5" fill="#7aa8f7" /><rect x="18.800" y="18.800" width="12.400" height="12.400" rx="1.5" fill="#fbe27a" />
              </g>
              <path d="M12 7l6 6v12M18 13l6 5" stroke="#111" strokeWidth="1.8" fill="none" /><circle cx="18" cy="13.500" r="2.2" /><circle cx="18" cy="25.500" r="2.3" /><circle cx="25" cy="18.500" r="2.3" />
            </T>
          </Task>
          <Task>
            <T><path d="M2 0l16.500.5v16L3 17.500z" fill="#cf2c2c" /><path d="M20 .5h14v15l-14 1z" fill="#33ae24" /><path d="M3 19.500l15.500-1.300V34L4 36z" fill="#c6bd2c" /><path d="M20 18l14-1v15l-14 1.500z" fill="#5124b4" /></T>
          </Task>
          <Task $line={blue}>
            <T>
              <circle cx="18" cy="18" r="18" fill="#fcc934" /><path d="M18 9h15.600A18 18 0 0 0 2.400 9l7.800 13.500z" fill="#e33b2e" />
              <path d="M2.400 9A18 18 0 0 0 18 36l7.800-13.500H10.200z" fill="#2a9a48" /><circle cx="18" cy="18" r="8.5" fill="#fff" /><circle cx="18" cy="18" r="6.8" fill="#1a73e8" />
              <circle cx="27" cy="26" r="11" fill="#8d93ad" /><path d="M16 27h22a11 11 0 0 1-22 0z" fill="#c29a8d" /><path d="M18 32c2-3 5-4 7-4l1-7h2l1 7c2 0 5 1 7 4a11 11 0 0 1-18 0z" fill="#15131c" />
            </T>
          </Task>
          <Task $line={blue}><Xampp size={36} /></Task>
          <Tray $w={147} $pl={70}>Desktop</Tray>
          <Overflow $w={54}><svg width="14" height="12" viewBox="0 0 14 12"><path d="M1 1l5 5-5 5M7.500 1l5 5-5 5" fill="none" stroke="#4c4673" strokeWidth="2" /></svg></Overflow>
          <Tray $w={49}>
            <T>
              <defs><linearGradient id="cl" x2="0" y2="1"><stop stopColor="#e4eefe" /><stop offset="1" stopColor="#9dbbec" /></linearGradient></defs>
              <circle cx="29" cy="14" r="6" fill="#f3822a" /><path d="M7 34.500a7 7 0 0 1-.5-13.800C7 15 11 11.500 16 11.500c5 0 8 2.500 9.500 7C32 18 36 22 36 26.500s-3 8-8 8z" fill="url(#cl)" />
              <circle cx="27" cy="9" r="9" fill="#cc2a20" /><IconText x={27} y={13.5} size={12.5} weight={400}>1</IconText>
            </T>
          </Tray>
          <Tray $w={71}>30°C</Tray>
          <Tray $w={36}><Line w={15} h={9} stroke="#000" sw={2}><path d="M1 8l6.500-6.500L14 8" /></Line></Tray>
          <Tray $w={31}><Line w={17} h={20} stroke="#000" sw={1.8}><rect x="1" y="3" width="8" height="13" /><path d="M11 8h5v8h-5z" /></Line></Tray>
          <Tray $w={37}>
            <svg width="24" height="22" viewBox="0 0 24 22"><path d="M4 14a5 5 0 0 1 1-9C7 1 10 0 13 0c4 0 6 2 7 5l-2 9z" fill="#1686dc" /><circle cx="17.500" cy="14" r="7" fill="#0f67bc" stroke="#0b3f78" strokeWidth=".6" /><IconText x={17.5} y={18} size={10.5}>i</IconText></svg>
          </Tray>
          <Tray $w={45}><Line w={23} h={16} stroke="#000" sw={2}><rect x="4" y="3" width="17" height="11" fill="#000" /><path d="M1 1v5h4V1M22.500 7v3" /></Line></Tray>
          <Tray $w={20}><Line w={15} h={16} stroke="#000" sw={2}><path d="M1 14A13 13 0 0 1 14 1M6 15a8 8 0 0 1 8-8M11 15.500a3 3 0 0 1 3-3" /></Line></Tray>
          <Clock><span>3:53 PM</span><span>12/8/2023</span></Clock>
          <Tray $w={80} $pl={18}><Line w={25} h={24} stroke="#000" sw={1.5}><path d="M1 1h23v16H13l-5 5v-5H1z" fill="#000" /></Line></Tray>
        </TaskRow>
      </Taskbar>
    </Screen>
  );
}
